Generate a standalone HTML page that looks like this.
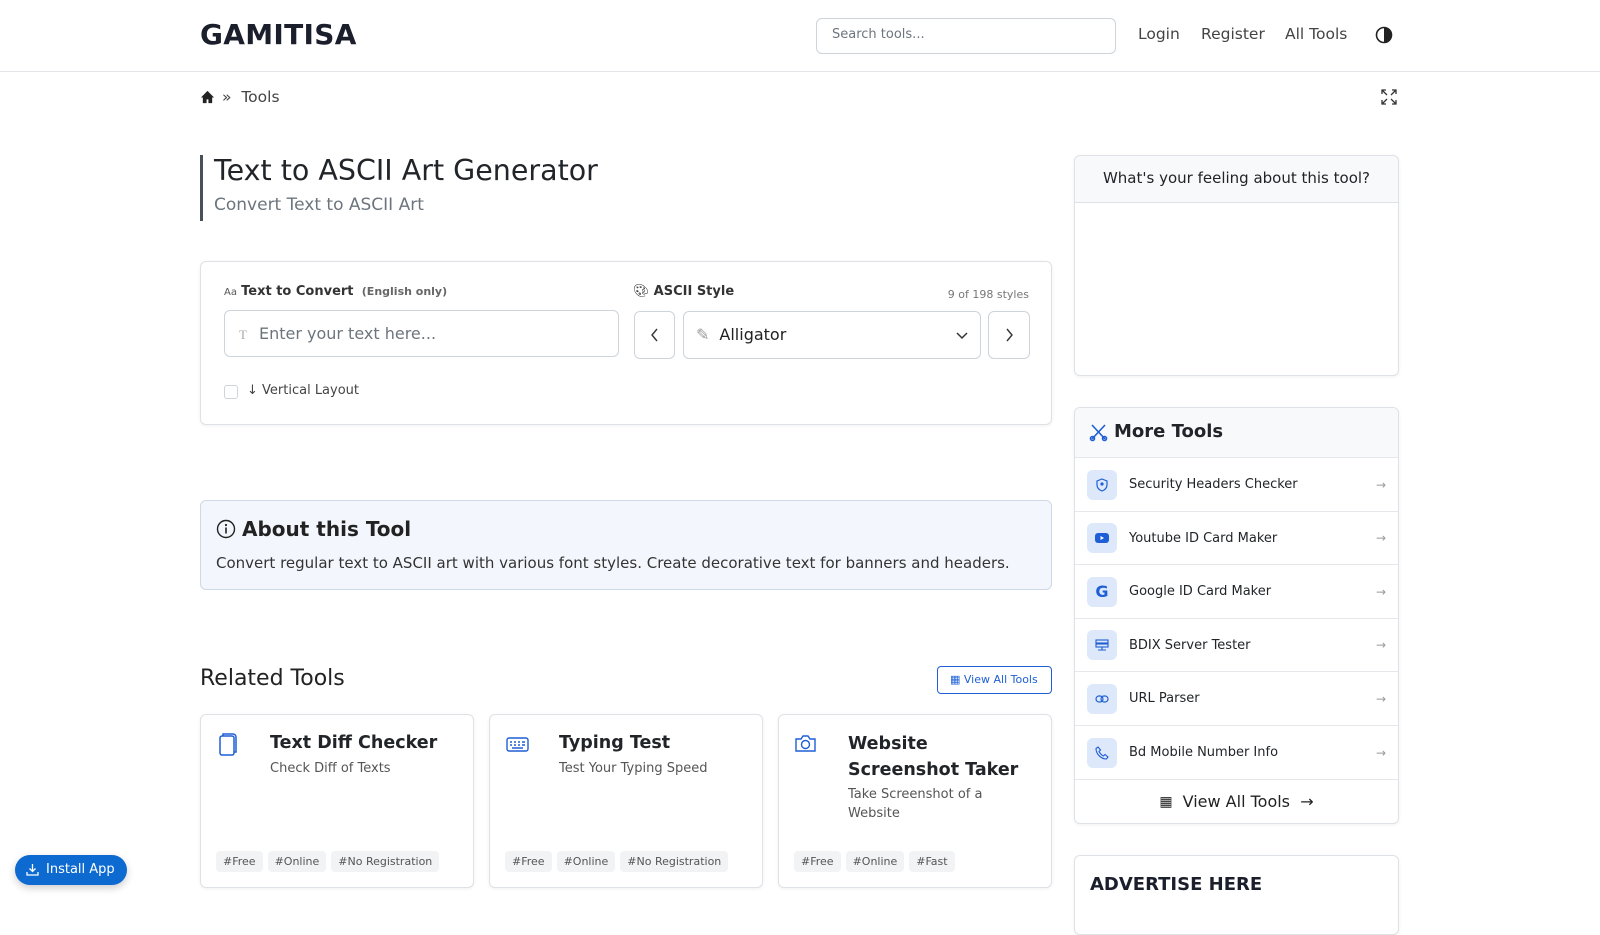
<!DOCTYPE html>
<html><head><meta charset="utf-8">
<style>
*{box-sizing:border-box;margin:0;padding:0}
body{width:1600px;height:900px;overflow:hidden;background:#fff;font-family:"DejaVu Sans","Liberation Sans",sans-serif;color:#212529;position:relative}
.a{position:absolute}
.card{position:absolute;border:1px solid #dee2e6;border-radius:6px;background:#fff;box-shadow:0 1px 3px rgba(0,0,0,.06)}
.tag{display:inline-block;background:#f1f3f5;color:#555;font-size:11px;padding:4px 7px;border-radius:4px;margin-right:5px}
.row{position:absolute;left:0;right:0;height:54px;border-top:1px solid #e5e7eb;display:flex;align-items:center;padding-left:12px;font-size:13px}
.ic{width:30px;height:30px;border-radius:6px;background:#dde8fb;margin-right:12px;display:flex;align-items:center;justify-content:center;color:#1f5fd6}
.arr{position:absolute;right:12px;color:#999;font-size:12px}
svg{display:block}
</style></head><body>
<!-- header -->
<div class="a" style="left:200px;top:18px;font-size:28px;font-weight:bold;color:#1a1f2b;letter-spacing:.3px">GAMITISA</div>
<div class="a" style="left:816px;top:18px;width:300px;height:36px;border:1px solid #ced4da;border-radius:6px;font-size:13px;color:#6c757d;padding:8px 15px">Search tools...</div>
<div class="a" style="left:1138px;top:25px;font-size:15.5px;color:#444">Login</div>
<div class="a" style="left:1201px;top:25px;font-size:15.5px;color:#444">Register</div>
<div class="a" style="left:1285px;top:25px;font-size:15.5px;color:#444">All Tools</div>
<div class="a" style="left:1375px;top:26px"><svg width="18" height="18" viewBox="0 0 18 18"><circle cx="9" cy="9" r="7.5" fill="none" stroke="#222" stroke-width="1.6"/><path d="M9 1.5a7.5 7.5 0 0 1 0 15z" fill="#222"/></svg></div>
<div class="a" style="left:0;top:71px;width:1600px;height:1px;background:#e3e5e8"></div>
<!-- breadcrumb -->
<div class="a" style="left:200px;top:90px"><svg width="15" height="14" viewBox="0 0 16 15"><path d="M8 1L1 8h2v6h4v-4h2v4h4V8h2z" fill="#222"/></svg></div>
<div class="a" style="left:222px;top:88px;font-size:15.5px;color:#444">» &nbsp;Tools</div>
<div class="a" style="left:1381px;top:89px"><svg width="16" height="16" viewBox="0 0 16 16" fill="none" stroke="#333" stroke-width="1.3"><path d="M1 5V1h4M1 1l5 5M15 5V1h-4M15 1l-5 5M1 11v4h4M1 15l5-5M15 11v4h-4M15 15l-5-5"/></svg></div>
<!-- title -->
<div class="a" style="left:200px;top:155px;width:3px;height:66px;background:#495057"></div>
<div class="a" style="left:214px;top:154px;font-size:28.5px;color:#212529">Text to ASCII Art Generator</div>
<div class="a" style="left:214px;top:195px;font-size:17px;color:#6c757d">Convert Text to ASCII Art</div>
<!-- tool card -->
<div class="card" style="left:200px;top:261px;width:852px;height:164px">
 <div class="a" style="left:23px;top:22px;font-size:13px;color:#333"><span style="font-size:10px;color:#555">Aa</span> <b>Text to Convert</b> &nbsp;<span style="font-size:11px;color:#666;font-weight:bold">(English only)</span></div>
 <div class="a" style="left:23px;top:48px;width:395px;height:47px;border:1px solid #ced4da;border-radius:6px;font-size:16px;color:#6c757d;padding:13px 14px"><span style="font-size:13px;color:#aaa;margin-right:12px;font-family:'Liberation Serif',serif">T</span>Enter your text here...</div>
 <div class="a" style="left:432px;top:22px;font-size:13px;color:#333"><span style="font-size:13px">🎨︎</span> <b>ASCII Style</b></div>
 <div class="a" style="right:22px;top:26px;font-size:11px;color:#777">9 of 198 styles</div>
 <div class="a" style="left:433px;top:49px;width:41px;height:48px;border:1px solid #ced4da;border-radius:6px;display:flex;align-items:center;justify-content:center"><svg width="10" height="14" viewBox="0 0 10 14"><path d="M7 1L2 7l5 6" fill="none" stroke="#333" stroke-width="1.4"/></svg></div>
 <div class="a" style="left:482px;top:49px;width:298px;height:48px;border:1px solid #ced4da;border-radius:6px;font-size:16px;padding:13px 12px;color:#222"><span style="color:#999;margin-right:10px">✎</span>Alligator<svg class="a" style="right:12px;top:20px" width="12" height="8" viewBox="0 0 12 8"><path d="M1 1l5 5 5-5" fill="none" stroke="#333" stroke-width="1.5"/></svg></div>
 <div class="a" style="left:787px;top:49px;width:42px;height:48px;border:1px solid #ced4da;border-radius:6px;display:flex;align-items:center;justify-content:center"><svg width="10" height="14" viewBox="0 0 10 14"><path d="M3 1l5 6-5 6" fill="none" stroke="#333" stroke-width="1.4"/></svg></div>
 <div class="a" style="left:23px;top:123px;width:14px;height:14px;border:1px solid #ced4da;border-radius:3px"></div>
 <div class="a" style="left:46px;top:121px;font-size:13px;color:#444">↓ Vertical Layout</div>
</div>
<!-- about -->
<div class="a" style="left:200px;top:500px;width:852px;height:90px;border:1px solid #cfd8e6;border-radius:6px;background:#f3f7fd">
 <div class="a" style="left:15px;top:16px;font-size:20px;font-weight:bold;color:#222;display:flex;align-items:center"><svg width="20" height="20" viewBox="0 0 20 20" style="margin-right:6px"><circle cx="10" cy="10" r="8.5" fill="none" stroke="#222" stroke-width="1.4"/><path d="M10 8.5v6" stroke="#222" stroke-width="1.6"/><circle cx="10" cy="6" r="1.1" fill="#222"/></svg>About this Tool</div>
 <div class="a" style="left:15px;top:53px;font-size:15px;color:#333;white-space:nowrap">Convert regular text to ASCII art with various font styles. Create decorative text for banners and headers.</div>
</div>
<!-- related -->
<div class="a" style="left:200px;top:666px;font-size:22px;color:#222">Related Tools</div>
<div class="a" style="left:937px;top:666px;width:115px;height:28px;border:1px solid #1f5fd6;border-radius:4px;font-size:11px;color:#1f5fd6;padding:6px 0 0 12px">▦ View All Tools</div>
<div class="card" style="left:200px;top:714px;width:274px;height:174px">
 <div class="a" style="left:17px;top:17px"><svg width="20" height="24" viewBox="0 0 20 24" fill="none" stroke="#1f5fd6" stroke-width="1.5"><rect x="2" y="4" width="14" height="19" rx="2"/><path d="M5 4V2h10a3 3 0 0 1 3 3v15h-2"/></svg></div>
 <div class="a" style="left:69px;top:18px;font-size:17.5px;font-weight:bold">Text Diff Checker</div>
 <div class="a" style="left:69px;top:46px;font-size:13px;color:#555">Check Diff of Texts</div>
 <div class="a" style="left:15px;top:135px;white-space:nowrap"><span class="tag">#Free</span><span class="tag">#Online</span><span class="tag">#No Registration</span></div>
</div>
<div class="card" style="left:489px;top:714px;width:274px;height:174px">
 <div class="a" style="left:16px;top:22px"><svg width="23" height="15" viewBox="0 0 23 15" fill="none" stroke="#1f5fd6" stroke-width="1.4"><rect x="1" y="1" width="21" height="13" rx="2"/><path d="M4 5h2M8 5h2M12 5h2M16 5h3M4 8h2M8 8h2M12 8h2M16 8h3M6 11h11"/></svg></div>
 <div class="a" style="left:69px;top:18px;font-size:17.5px;font-weight:bold">Typing Test</div>
 <div class="a" style="left:69px;top:46px;font-size:13px;color:#555">Test Your Typing Speed</div>
 <div class="a" style="left:15px;top:135px;white-space:nowrap"><span class="tag">#Free</span><span class="tag">#Online</span><span class="tag">#No Registration</span></div>
</div>
<div class="card" style="left:778px;top:714px;width:274px;height:174px">
 <div class="a" style="left:15px;top:19px"><svg width="23" height="19" viewBox="0 0 23 19" fill="none" stroke="#1f5fd6" stroke-width="1.4"><path d="M2 5h5l2-3h5l2 3h5v12H2z"/><circle cx="11.5" cy="10.5" r="4"/></svg></div>
 <div class="a" style="left:69px;top:16px;font-size:17.5px;font-weight:bold;line-height:26px">Website<br>Screenshot Taker</div>
 <div class="a" style="left:69px;top:70px;font-size:13px;color:#555;line-height:19px">Take Screenshot of a<br>Website</div>
 <div class="a" style="left:15px;top:135px;white-space:nowrap"><span class="tag">#Free</span><span class="tag">#Online</span><span class="tag">#Fast</span></div>
</div>
<!-- right column -->
<div class="card" style="left:1074px;top:155px;width:325px;height:221px">
 <div style="height:47px;background:#f8f9fa;border-bottom:1px solid #dee2e6;text-align:center;font-size:15px;padding-top:13px;border-radius:6px 6px 0 0">What's your feeling about this tool?</div>
</div>
<div class="card" style="left:1074px;top:407px;width:325px;height:417px;overflow:hidden">
 <div style="height:50px;background:#f8f9fa;font-size:18px;font-weight:bold;padding:13px 0 0 14px;display:flex;align-items:flex-start"><svg width="19" height="19" viewBox="0 0 19 19" fill="none" stroke="#1f5fd6" stroke-width="1.6" style="margin:2px 6px 0 0"><path d="M3 2l13 14M16 2L3 16"/><circle cx="3.5" cy="15.5" r="2"/><circle cx="15.5" cy="15.5" r="2"/></svg>More Tools</div>
 <div class="row" style="top:49px"><div class="ic"><svg width="12" height="14" viewBox="0 0 12 14" fill="none" stroke="#1f5fd6" stroke-width="1.2"><path d="M6 1l5 2v4c0 3-2.5 5-5 6-2.5-1-5-3-5-6V3z"/><circle cx="6" cy="6" r="1" fill="#1f5fd6"/></svg></div>Security Headers Checker<span class="arr">→</span></div>
 <div class="row" style="top:102.6px"><div class="ic"><svg width="14" height="10" viewBox="0 0 14 10"><rect width="14" height="10" rx="3" fill="#1f5fd6"/><path d="M5.5 3v4l3.5-2z" fill="#fff"/></svg></div>Youtube ID Card Maker<span class="arr">→</span></div>
 <div class="row" style="top:156.2px"><div class="ic" style="font-weight:bold;font-size:16px">G</div>Google ID Card Maker<span class="arr">→</span></div>
 <div class="row" style="top:209.8px"><div class="ic"><svg width="14" height="12" viewBox="0 0 14 12" fill="none" stroke="#1f5fd6" stroke-width="1.1"><rect x="1" y="1" width="12" height="3"/><rect x="1" y="5" width="12" height="3"/><path d="M7 8v3M3 11h8"/></svg></div>BDIX Server Tester<span class="arr">→</span></div>
 <div class="row" style="top:263.4px"><div class="ic"><svg width="14" height="8" viewBox="0 0 14 8" fill="none" stroke="#1f5fd6" stroke-width="1.2"><rect x="1" y="1" width="7" height="6" rx="3"/><rect x="6" y="1" width="7" height="6" rx="3"/></svg></div>URL Parser<span class="arr">→</span></div>
 <div class="row" style="top:317px"><div class="ic"><svg width="14" height="14" viewBox="0 0 14 14" fill="none" stroke="#1f5fd6" stroke-width="1.1"><path d="M3 1l2.5 3-1.5 1.5c1 2 2.5 3.5 4.5 4.5L10 8.5l3 2.5-1.5 2C6 13 1 8 1 2.5z"/></svg></div>Bd Mobile Number Info<span class="arr">→</span></div>
 <div class="row" style="top:370.6px;justify-content:center;padding:0;font-size:16px;color:#222;height:45px"><span style="font-size:14px;margin-right:10px">▦</span>View All Tools &nbsp;→</div>
</div>
<div class="card" style="left:1074px;top:855px;width:325px;height:80px">
 <div class="a" style="left:15px;top:18px;font-size:18px;font-weight:bold;color:#1a1f2b">ADVERTISE HERE</div>
</div>
<!-- install -->
<div class="a" style="left:15px;top:855px;width:112px;height:30px;background:#0d6ad1;border-radius:15px;color:#fff;font-size:13px;padding:7px 0 0 11px;box-shadow:0 3px 8px rgba(0,0,0,.2);display:flex;align-items:flex-start"><svg width="13" height="13" viewBox="0 0 13 13" fill="none" stroke="#fff" stroke-width="1.3" style="margin:1px 7px 0 0"><path d="M6.5 1v7M3.5 5.5l3 3 3-3M1 9v3h11V9"/></svg>Install App</div>
</body></html>
